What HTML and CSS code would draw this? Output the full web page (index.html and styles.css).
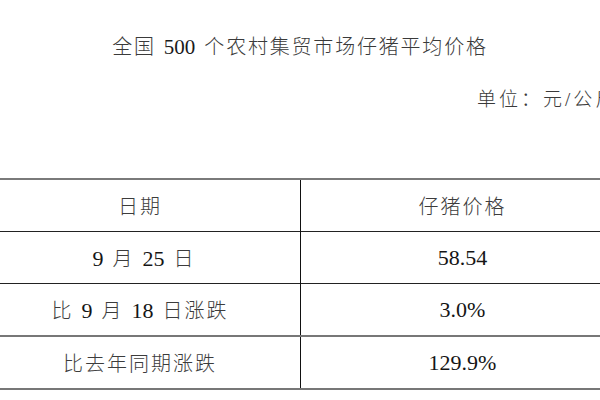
FILE: index.html
```html
<!DOCTYPE html>
<html lang="zh-CN">
<head>
<meta charset="utf-8">
<title>全国500个农村集贸市场仔猪平均价格</title>
<link rel="stylesheet" href="styles.css">
</head>
<body>
<div class="page">
  <h1 class="title">全国<span class="num">500</span>个农村集贸市场仔猪平均价格</h1>
  <div class="unit">单位：元/公斤</div>
  <table class="prices">
    <tr class="r-head">
      <td class="cjk">日期</td>
      <td class="cjk">仔猪价格</td>
    </tr>
    <tr class="r1">
      <td class="cjk"><span class="num">9</span>月<span class="num">25</span>日</td>
      <td class="num-cell">58.54</td>
    </tr>
    <tr class="r2">
      <td class="cjk">比<span class="num">9</span>月<span class="num">18</span>日涨跌</td>
      <td class="num-cell">3.0%</td>
    </tr>
    <tr class="r3">
      <td class="cjk">比去年同期涨跌</td>
      <td class="num-cell">129.9%</td>
    </tr>
  </table>
</div>
</body>
</html>
```

FILE: styles.css
```css
html, body {
  margin: 0;
  padding: 0;
  background: #ffffff;
}
body {
  width: 600px;
  height: 400px;
  overflow: hidden;
  font-family: "Liberation Serif", "Noto Sans CJK SC", serif;
}
.page {
  display: flex;
  flex-direction: column;
}
.title {
  margin: 0;
  padding-top: 34px;
  height: 26px;
  line-height: 26px;
  font-size: 20px;
  font-weight: 300;
  letter-spacing: 1.8px;
  color: #3a3a3a;
  text-align: center;
  white-space: nowrap;
}
.title .num {
  font-family: "Liberation Serif", serif;
  font-weight: 400;
  font-size: 21px;
  color: #1a1a1a;
  margin: 0 9px 0 8px;
  letter-spacing: 0;
}
.unit {
  margin-top: 27px;
  height: 26px;
  line-height: 26px;
  padding-left: 477px;
  font-size: 19px;
  font-weight: 300;
  letter-spacing: 3px;
  color: #3a3a3a;
  white-space: nowrap;
}
.prices {
  margin-top: 65px;
  margin-left: -20px;
  width: 644px;
  border-collapse: collapse;
  table-layout: fixed;
}
.prices td {
  height: 51px;
  padding: 0;
  text-align: center;
  vertical-align: middle;
  white-space: nowrap;
}
.prices td:first-child {
  width: 320px;
  border-right: 1px solid #111;
}
.prices tr {
  border-top: 1px solid #222;
}
.prices .r-head {
  border-top: 2px solid #7a7a7a;
}
.prices .r3 {
  border-top: 2px solid #777;
  border-bottom: 2px solid #777;
}
.cjk {
  font-family: "Noto Sans CJK SC", sans-serif;
  font-size: 20px;
  font-weight: 300;
  letter-spacing: 2px;
  color: #3c3c3c;
}
.cjk .num {
  font-family: "Liberation Serif", serif;
  font-weight: 400;
  font-size: 22px;
  color: #151515;
  letter-spacing: 0;
  margin: 0 9px 0 8px;
}
.num-cell {
  font-family: "Liberation Serif", serif;
  font-size: 22px;
  color: #151515;
}
```
